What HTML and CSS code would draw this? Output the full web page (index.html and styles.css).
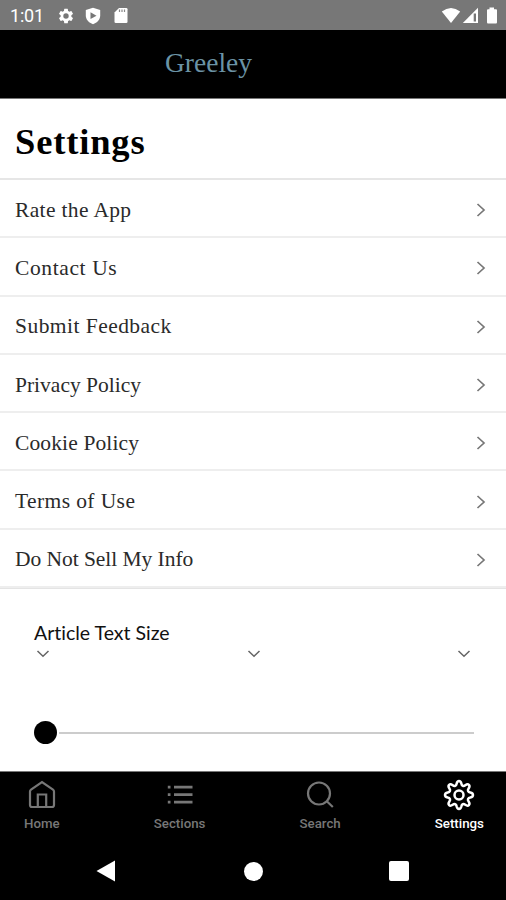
FILE: index.html
```html
<!DOCTYPE html>
<html lang="en">
<head>
<meta charset="utf-8">
<title>Settings</title>
<link rel="stylesheet" href="styles.css">
</head>
<body>
<div class="status">
  <span class="time">1:01</span>
  <svg class="st-gear" width="18" height="18" viewBox="0 0 24 24" fill="#fff"><path d="M19.14 12.94a7.07 7.07 0 0 0 0-1.88l2.03-1.58a.49.49 0 0 0 .12-.61l-1.92-3.32a.49.49 0 0 0-.59-.22l-2.39.96a7 7 0 0 0-1.62-.94l-.36-2.54a.48.48 0 0 0-.48-.41h-3.84a.48.48 0 0 0-.47.41l-.36 2.54c-.59.24-1.13.57-1.62.94l-2.39-.96a.48.48 0 0 0-.59.22L2.74 8.87a.48.48 0 0 0 .12.61l2.03 1.58a7.3 7.3 0 0 0 0 1.88l-2.03 1.58a.49.49 0 0 0-.12.61l1.92 3.32c.12.22.37.29.59.22l2.39-.96c.5.38 1.03.7 1.62.94l.36 2.54c.05.24.24.41.48.41h3.84c.24 0 .44-.17.47-.41l.36-2.54a7 7 0 0 0 1.62-.94l2.39.96c.22.08.47 0 .59-.22l1.92-3.32a.48.48 0 0 0-.12-.61zM12 15.6a3.6 3.6 0 1 1 0-7.2 3.6 3.6 0 0 1 0 7.2z"/></svg>
  <svg class="st-shield" width="16" height="18" viewBox="0 0 16 18"><path fill="#fff" d="M8 .8 15.2 3v5.5c0 4-3 7.300-7.200 8.700C3.800 15.800.8 12.500.8 8.500V3z"/><path fill="#777" d="M5.500 5.300 11.500 8.700 5.500 12z"/></svg>
  <svg class="st-card" width="14" height="17" viewBox="0 0 14 17"><path fill="#fff" d="M5 1h7.200q1.300 0 1.300 1.300v12.400q0 1.300-1.300 1.300H1.800Q.5 16 .5 14.700V5.500z"/><path stroke="#888" stroke-width="1.200" d="M5.500 2.500v2.500M8 2.500v2.500M10.500 2.500v2.500"/></svg>
  <span class="grow"></span>
  <svg width="20" height="17" viewBox="0 0 20 17"><path fill="#fff" d="M.8 4.500Q10-2.500 19.200 4.500L10 16z"/></svg>
  <svg class="st-signal" width="17" height="17" viewBox="0 0 17 17"><path fill="#fff" d="M16 .8V16H.8z"/><path fill="#777" d="M11.700 6.500H14v8h-2.300z"/></svg>
  <svg class="st-batt" width="12" height="17" viewBox="0 0 12 17"><path fill="#fff" d="M3.500.5h4.500v1.800h2q1 0 1 1v12q0 1.200-1 1.200H2q-1 0-1-1.200v-12q0-1 1-1h1.500z"/></svg>
</div>
<header class="brand">Greeley</header>
<main>
  <h1>Settings</h1>
  <ul class="list">
    <li><span class="rate">Rate the App</span><svg class="chev" viewBox="0 0 10 14"><path d="M1.500 1 8 7 1.500 13"/></svg></li>
    <li><span class="contact">Contact Us</span><svg class="chev" viewBox="0 0 10 14"><path d="M1.500 1 8 7 1.500 13"/></svg></li>
    <li><span class="feedback">Submit Feedback</span><svg class="chev" viewBox="0 0 10 14"><path d="M1.500 1 8 7 1.500 13"/></svg></li>
    <li><span class="privacy">Privacy Policy</span><svg class="chev" viewBox="0 0 10 14"><path d="M1.500 1 8 7 1.500 13"/></svg></li>
    <li><span class="cookie">Cookie Policy</span><svg class="chev" viewBox="0 0 10 14"><path d="M1.500 1 8 7 1.500 13"/></svg></li>
    <li><span class="terms">Terms of Use</span><svg class="chev" viewBox="0 0 10 14"><path d="M1.500 1 8 7 1.500 13"/></svg></li>
    <li><span class="sell">Do Not Sell My Info</span><svg class="chev" viewBox="0 0 10 14"><path d="M1.500 1 8 7 1.500 13"/></svg></li>
  </ul>
  <section class="size">
    <div class="size-label">Article Text Size</div>
    <div class="ticks">
      <svg viewBox="0 0 14 8"><path d="M1.500 1 7 6.300 12.500 1"/></svg>
      <svg viewBox="0 0 14 8"><path d="M1.500 1 7 6.300 12.500 1"/></svg>
      <svg viewBox="0 0 14 8"><path d="M1.500 1 7 6.300 12.500 1"/></svg>
    </div>
    <div class="slider"><span class="thumb"></span><span class="track"></span></div>
  </section>
</main>
<nav class="tabs">
  <div class="tab home"><svg width="32" height="32" viewBox="0 0 32 32"><path d="M4 12.500Q4 11.300 5 10.600L16 3l11 7.600q1 .7 1 1.900V26q0 2-2 2H6q-2 0-2-2z"/><path d="M11.800 28V15.500h8.400V28"/></svg><span>Home</span></div>
  <div class="tab sections"><svg width="32" height="32" viewBox="0 0 32 32"><path stroke-width="2.700" d="M10 8.200h18.500M10 15.700h18.500M10 23.200h18.500M3.800 8.200h2.700M3.800 15.700h2.700M3.800 23.200h2.700"/></svg><span>Sections</span></div>
  <div class="tab search"><svg width="32" height="32" viewBox="0 0 32 32"><circle cx="15" cy="14.500" r="11"/><path d="m22.800 22.300 6 5.700"/></svg><span>Search</span></div>
  <div class="tab active"><svg width="32" height="32" viewBox="0 0 32 32"><circle cx="16" cy="16" r="4.500"/><path d="M13.600 4.700Q14.200 2 16 2t2.400 2.700c.4 2.400 2.100 2.900 3.900 1.600q2.300-1.700 3.600-.4t-.3 3.600c-1.400 2-.6 3.600 1.700 4q2.700.6 2.700 2.500t-2.700 2.500c-2.300.4-3.100 2-1.700 4q1.600 2.300.3 3.600t-3.600-.3c-1.800-1.300-3.500-.8-3.900 1.500Q17.800 30 16 30t-2.400-2.700c-.4-2.300-2.100-2.800-3.900-1.500q-2.300 1.600-3.600.3t.3-3.600c1.400-2 .6-3.600-1.700-4Q2 17.900 2 16t2.700-2.500c2.300-.4 3.100-2 1.700-4Q4.800 7.200 6.100 5.900t3.600.4c1.800 1.300 3.500.8 3.900-1.600z"/></svg><span>Settings</span></div>
</nav>
<div class="sysnav">
  <svg width="20" height="22" viewBox="0 0 20 22"><path fill="#fff" d="M19 .5v21L.5 11z"/></svg>
  <span class="dot"></span>
  <span class="square"></span>
</div>
</body>
</html>
```
FILE: styles.css
```css
* { box-sizing: border-box; }
body { margin: 0; width: 506px; height: 900px; overflow: hidden; display: flex; flex-direction: column; background: #fff; color: #2a2a2a; }
svg { display: block; flex: none; }

.status { height: 30px; flex: none; display: flex; align-items: center; background: #777; padding: 1px 8px 0 10px; font: 18px Roboto, sans-serif; color: #fff; }
.time { width: 47px; letter-spacing: -0.2px; }
.st-shield { margin-left: 10px; }
.st-card { margin-left: 13px; }
.grow { flex: 1; }
.st-signal { margin-left: 1px; }
.st-batt { margin-left: 7px; }

.brand { height: 69px; flex: none; padding-left: 165px; background: #000; border-bottom: 1px solid #777; color: #6b93a5; font: 27.500px/66px "Liberation Serif", serif; letter-spacing: 0; }

main { height: 672px; flex: none; }
h1 { margin: 0; height: 81px; padding-left: 15px; border-bottom: 2px solid #e6e6e6; font: bold 36.500px/86px "Liberation Serif", serif; letter-spacing: 0.850px; color: #000; }

.list { margin: 0; padding: 0; list-style: none; border-bottom: 1px solid #e4e4e4; }
.list li { display: flex; align-items: center; justify-content: space-between; height: 58.300px; padding: 3px 20px 0 15px; border-bottom: 2px solid #eee; font: 21.500px/28px "Liberation Serif", serif; }
.rate { letter-spacing: 0.350px; }
.contact { letter-spacing: 0.620px; }
.feedback { letter-spacing: 0.460px; }
.privacy { letter-spacing: 0; }
.cookie { letter-spacing: 0.130px; }
.terms { letter-spacing: 0.400px; }
.sell { letter-spacing: -0.050px; }
.chev { width: 10px; height: 14px; margin-top: 1px; fill: none; stroke: #777; stroke-width: 1.700; }

.size { padding: 31px 32px 0 34px; }
.size-label { height: 28px; font: 19.500px/26px Lato, sans-serif; font-variant-ligatures: none; color: #111; }
.ticks { display: flex; justify-content: space-between; padding: 2px 3px 0 2px; }
.ticks svg { width: 14px; height: 8px; fill: none; stroke: #666; stroke-width: 1.500; }
.slider { display: flex; align-items: center; gap: 2px; height: 24px; margin-top: 62px; }
.thumb { width: 23px; height: 23px; border-radius: 50%; background: #000; }
.track { flex: 1; height: 2px; margin-top: 1px; background: #ccc; }

.tabs { height: 71px; flex: none; display: flex; justify-content: space-between; padding: 7px 22px 0 24px; background: #000; border-top: 1px solid #777; }
.tab { display: flex; flex-direction: column; align-items: center; color: #777; font: 500 13.300px/16px Roboto, sans-serif; }
.tab svg { fill: none; stroke: currentColor; stroke-width: 2.200; }
.tab span { margin-top: 5px; }
.active { color: #fff; }
.active svg { stroke-width: 2.500; }

.sysnav { flex: 1; display: flex; align-items: center; justify-content: space-between; padding: 0 97px 0 96px; background: #000; }
.dot { width: 19px; height: 19px; margin-left: 2px; border-radius: 50%; background: #fff; }
.square { width: 20px; height: 20px; border-radius: 2px; background: #fff; }
```
